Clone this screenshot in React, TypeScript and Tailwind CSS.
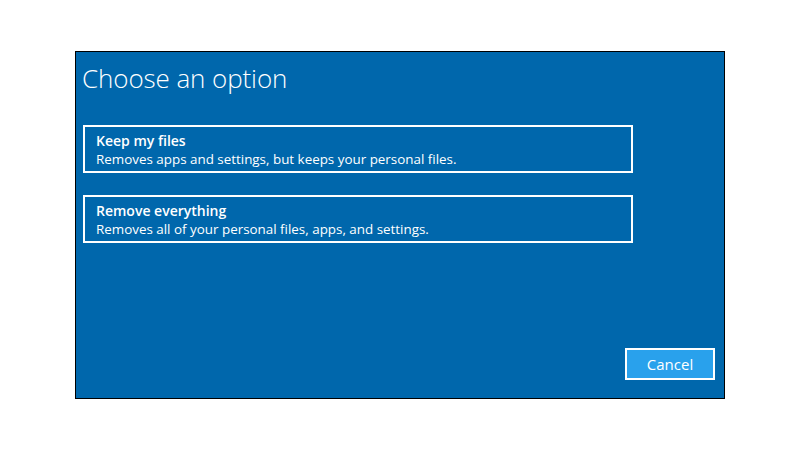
import React from "react";

const options = [
  {
    title: "Keep my files",
    desc: "Removes apps and settings, but keeps your personal files.",
  },
  {
    title: "Remove everything",
    desc: "Removes all of your personal files, apps, and settings.",
  },
];

const App = () => {
  return (
    <div className="w-[800px] h-[450px] bg-white pt-[51px] pl-[75px] font-['Open_Sans',sans-serif]">
      <div className="w-[650px] h-[348px] border border-black bg-[#0067ac] flex flex-col pl-[7px] pr-[9px] pb-[18px]">
        <h1 className="text-[26px] leading-[34px] font-light text-white mt-[9px] ml-[-1px] tracking-[-0.1px]">
          Choose an option
        </h1>
        <div className="flex flex-col gap-[22px] mt-[30px]">
          {options.map((opt, index) => (
            <button
              key={index}
              type="button"
              className="w-[550px] h-[48px] border-2 border-white text-left pl-[11px] pt-[1px] text-white"
            >
              <div className="text-[14px] leading-[19px] font-semibold">{opt.title}</div>
              <div className="text-[13.4px] leading-[19px]">{opt.desc}</div>
            </button>
          ))}
        </div>
        <button
          type="button"
          className="mt-auto self-end w-[90px] h-[32px] border-2 border-white bg-[#29a1ec] text-white text-[15px] font-medium"
        >
          Cancel
        </button>
      </div>
    </div>
  );
};

export default App;
